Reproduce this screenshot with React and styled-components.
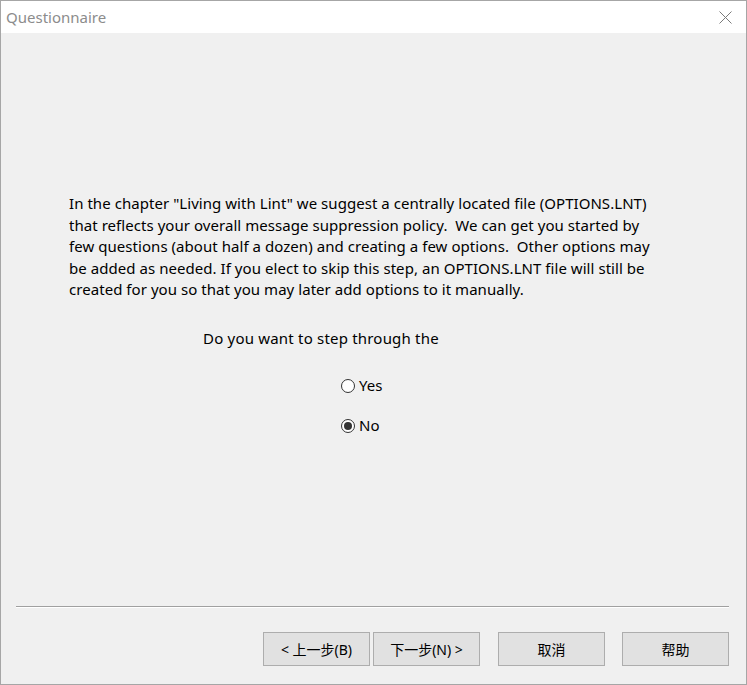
import React, { useState } from "react";
import styled, { createGlobalStyle } from "styled-components";

const GlobalStyle = createGlobalStyle`
  html, body {
    margin: 0;
    padding: 0;
    background: #f0f0f0;
  }
  * {
    box-sizing: border-box;
  }
`;

const FONT = `"Noto Sans", "Noto Sans CJK SC", sans-serif`;

const Window = styled.div`
  width: 747px;
  height: 685px;
  display: flex;
  flex-direction: column;
  border: 1px solid #a6a6a6;
  background: #f0f0f0;
  font-family: ${FONT};
  color: #000;
`;

const TitleBar = styled.div`
  height: 32px;
  flex: none;
  background: #fff;
  display: flex;
  align-items: center;
  justify-content: space-between;
  padding: 0 14px 0 5px;
`;

const Title = styled.span`
  font-size: 15px;
  color: #8c8c8c;
`;

const CloseButton = styled.button`
  width: 14px;
  height: 14px;
  padding: 0;
  border: none;
  background: transparent;
  display: flex;
  align-items: center;
  justify-content: center;
`;

const Main = styled.div`
  flex: 1;
  display: flex;
  flex-direction: column;
  padding: 160px 0 0 68px;
`;

const Paragraph = styled.p`
  margin: 0;
  font-size: 15px;
  line-height: 21.5px;
  letter-spacing: 0.05px;
  white-space: nowrap;
`;

const Question = styled.div`
  margin: 27px 0 0 134px;
  font-size: 15px;
  line-height: 21.5px;
  letter-spacing: 0.2px;
`;

const RadioGroup = styled.div`
  display: flex;
  flex-direction: column;
  gap: 19px;
  margin: 26px 0 0 272px;
`;

const RadioRow = styled.label`
  display: flex;
  align-items: center;
  gap: 4px;
  font-size: 15px;
  line-height: 21px;
  cursor: default;
`;

const RadioCircle = styled.span`
  width: 14px;
  height: 14px;
  border-radius: 50%;
  border: 1px solid #333;
  background: #fff;
  display: flex;
  align-items: center;
  justify-content: center;

  &::after {
    content: "";
    width: 8px;
    height: 8px;
    border-radius: 50%;
    background: ${(p) => (p.$checked ? "#333" : "transparent")};
  }
`;

const Footer = styled.div`
  flex: none;
  padding: 0 17px 18px 15px;
`;

const Separator = styled.div`
  height: 2px;
  border-top: 1px solid #a0a0a0;
  border-bottom: 1px solid #fff;
`;

const ButtonRow = styled.div`
  display: flex;
  justify-content: flex-end;
  margin-top: 24px;
`;

const Button = styled.button`
  width: 107px;
  height: 34px;
  margin-left: ${(p) => p.$gap || 0}px;
  border: 1px solid #adadad;
  background: #e1e1e1;
  font-family: ${FONT};
  font-size: 14px;
  color: #000;
  padding: 0;
`;

const options = ["Yes", "No"];

export default function App() {
  const [choice, setChoice] = useState("No");

  return (
    <>
      <GlobalStyle />
      <Window>
        <TitleBar>
          <Title>Questionnaire</Title>
          <CloseButton aria-label="close">
            <svg width="13" height="13" viewBox="0 0 13 13">
              <path d="M0.5 0.5 L12.5 12.5 M12.5 0.5 L0.5 12.5" stroke="#7a7a7a" strokeWidth="1" />
            </svg>
          </CloseButton>
        </TitleBar>
        <Main>
          <Paragraph>
            In the chapter "Living with Lint" we suggest a centrally located file (OPTIONS.LNT)
            <br />
            that reflects your overall message suppression policy.&nbsp; We can get you started by
            <br />
            few questions (about half a dozen) and creating a few options.&nbsp; Other options may
            <br />
            be added as needed. If you elect to skip this step, an OPTIONS.LNT file will still be
            <br />
            created for you so that you may later add options to it manually.
          </Paragraph>
          <Question>Do you want to step through the</Question>
          <RadioGroup>
            {options.map((o) => (
              <RadioRow key={o} onClick={() => setChoice(o)}>
                <RadioCircle $checked={choice === o} />
                {o}
              </RadioRow>
            ))}
          </RadioGroup>
        </Main>
        <Footer>
          <Separator />
          <ButtonRow>
            <Button>&lt; 上一步(B)</Button>
            <Button $gap={3}>下一步(N) &gt;</Button>
            <Button $gap={18}>取消</Button>
            <Button $gap={17}>帮助</Button>
          </ButtonRow>
        </Footer>
      </Window>
    </>
  );
}
